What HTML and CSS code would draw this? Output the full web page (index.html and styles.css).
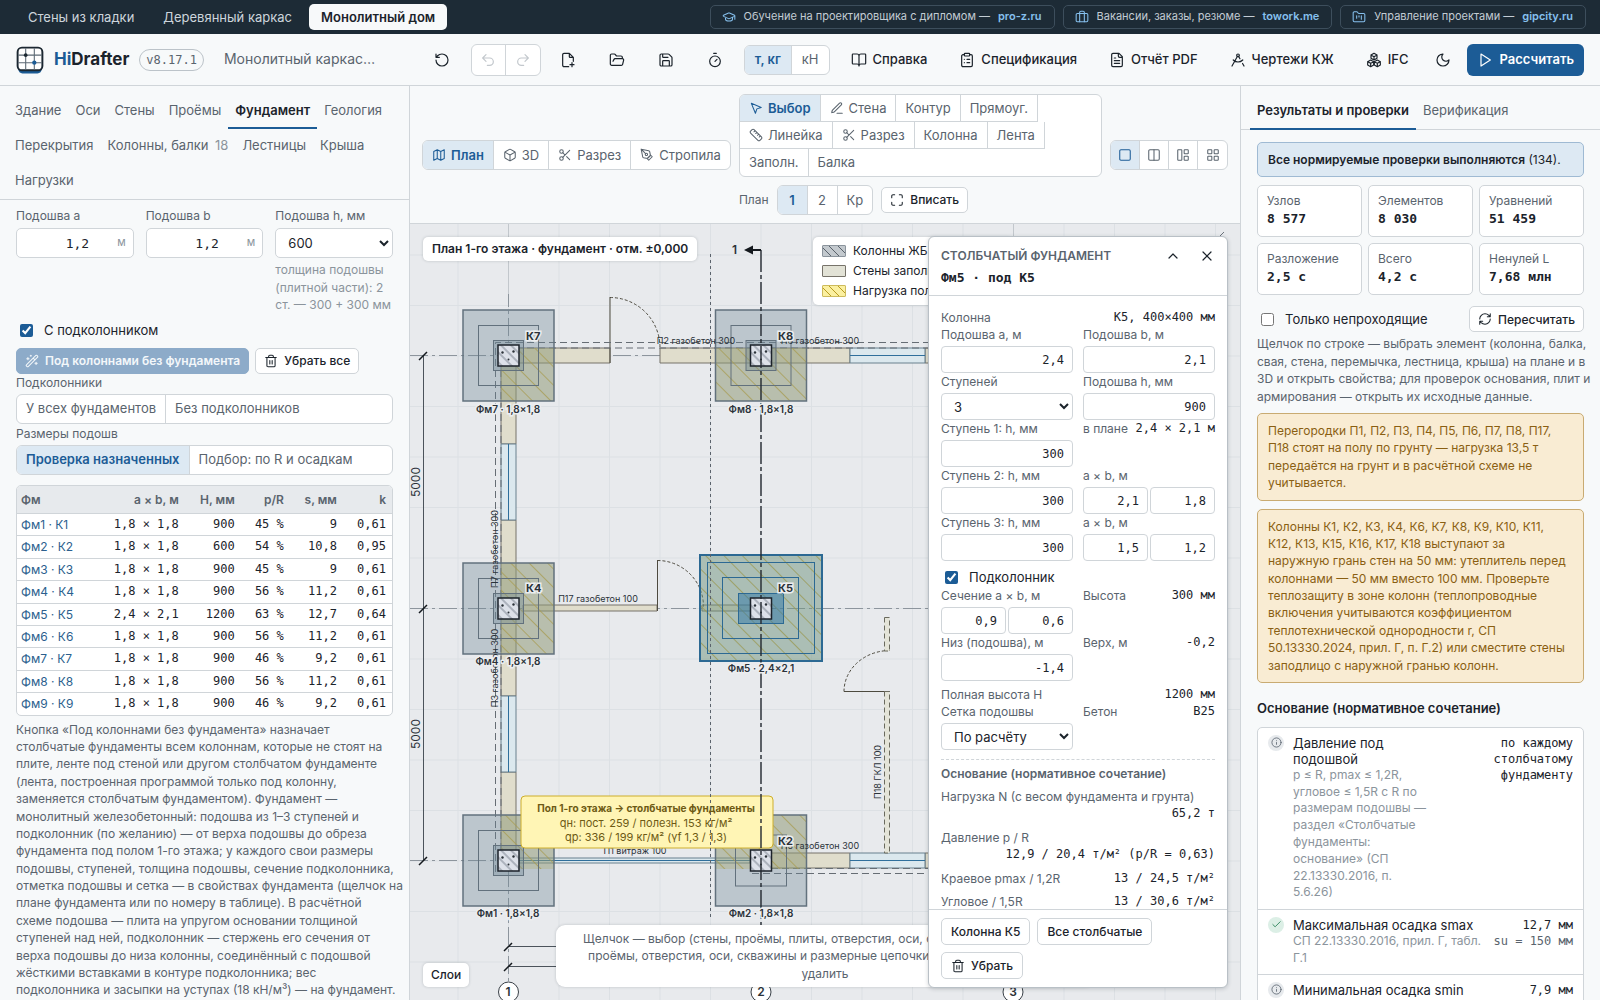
FILE: index.html
```html
<!DOCTYPE html>
<html lang="ru">
<head>
<meta charset="utf-8">
<meta name="viewport" content="width=device-width, initial-scale=1">
<title>HiDrafter — Монолитный дом</title>
<link rel="stylesheet" href="styles.css">
</head>
<body>
<svg class="sprite" aria-hidden="true">
  <symbol id="i-cap" viewBox="0 0 24 24"><path d="M21.4 10.9a1 1 0 0 0 0-1.8L12.8 5.2a2 2 0 0 0-1.6 0L2.6 9.1a1 1 0 0 0 0 1.8l8.6 3.9a2 2 0 0 0 1.6 0zM22 10v6M6 12.5V16a6 3 0 0 0 12 0v-3.5"/></symbol>
  <symbol id="i-case" viewBox="0 0 24 24"><path d="M16 20V4a2 2 0 0 0-2-2h-4a2 2 0 0 0-2 2v16"/><rect x="2" y="6" width="20" height="14" rx="2"/></symbol>
  <symbol id="i-kanban" viewBox="0 0 24 24"><path d="M4 20h16a2 2 0 0 0 2-2V8a2 2 0 0 0-2-2h-7.9a2 2 0 0 1-1.7-.9l-.8-1.2A2 2 0 0 0 7.9 3H4a2 2 0 0 0-2 2v13a2 2 0 0 0 2 2zM8 10v4M12 10v2M16 10v6"/></symbol>
  <symbol id="i-reset" viewBox="0 0 24 24"><path d="M3 12a9 9 0 1 0 9-9 9.8 9.8 0 0 0-6.7 2.7L3 8M3 3v5h5"/></symbol>
  <symbol id="i-undo" viewBox="0 0 24 24"><path d="M9 14 4 9l5-5M4 9h10.500a5.500 5.500 0 0 1 0 11H11"/></symbol>
  <symbol id="i-redo" viewBox="0 0 24 24"><path d="m15 14 5-5-5-5M20 9H9.500a5.500 5.500 0 0 0 0 11H13"/></symbol>
  <symbol id="i-new" viewBox="0 0 24 24"><path d="M13 22H6a2 2 0 0 1-2-2V4a2 2 0 0 1 2-2h8l6 6v6M14 2v5a1 1 0 0 0 1 1h5M18 16v6M15 19h6"/></symbol>
  <symbol id="i-open" viewBox="0 0 24 24"><path d="m6 14 1.5-2.900A2 2 0 0 1 9.200 10H20a2 2 0 0 1 1.900 2.500l-1.500 6a2 2 0 0 1-2 1.500H4a2 2 0 0 1-2-2V5a2 2 0 0 1 2-2h3.900a2 2 0 0 1 1.700.9l.8 1.200a2 2 0 0 0 1.700.9H18a2 2 0 0 1 2 2v2"/></symbol>
  <symbol id="i-save" viewBox="0 0 24 24"><path d="M15.200 3a2 2 0 0 1 1.400.6l3.800 3.800a2 2 0 0 1 .6 1.400V19a2 2 0 0 1-2 2H5a2 2 0 0 1-2-2V5a2 2 0 0 1 2-2zM17 21v-7a1 1 0 0 0-1-1H8a1 1 0 0 0-1 1v7M7 3v4a1 1 0 0 0 1 1h7"/></symbol>
  <symbol id="i-timer" viewBox="0 0 24 24"><path d="M10 2h4M12 14l3-3"/><circle cx="12" cy="14" r="8"/></symbol>
  <symbol id="i-book" viewBox="0 0 24 24"><path d="M12 6v15M3 18a1 1 0 0 1-1-1V4a1 1 0 0 1 1-1h6a3 3 0 0 1 3 3 3 3 0 0 1 3-3h6a1 1 0 0 1 1 1v13a1 1 0 0 1-1 1h-6a3 3 0 0 0-3 3 3 3 0 0 0-3-3z"/></symbol>
  <symbol id="i-clip" viewBox="0 0 24 24"><rect x="8" y="2" width="8" height="4" rx="1"/><path d="M16 4h2a2 2 0 0 1 2 2v14a2 2 0 0 1-2 2H6a2 2 0 0 1-2-2V6a2 2 0 0 1 2-2h2M12 11h4M12 16h4M8 11h.01M8 16h.01"/></symbol>
  <symbol id="i-doc" viewBox="0 0 24 24"><path d="M15 2H6a2 2 0 0 0-2 2v16a2 2 0 0 0 2 2h12a2 2 0 0 0 2-2V7zM14 2v4a2 2 0 0 0 2 2h4M10 9H8M16 13H8M16 17H8"/></symbol>
  <symbol id="i-compass" viewBox="0 0 24 24"><path d="m12.990 6.740 1.930 3.440M19.140 12a10 10 0 0 1-14.280 0M21 21l-2.160-3.840M3 21l8.020-14.260"/><circle cx="12" cy="5" r="2"/></symbol>
  <symbol id="i-boxes" viewBox="0 0 24 24"><path d="m12 2 4.500 2.500v5L12 12 7.500 9.500v-5zM7 12l4.500 2.500v5L7 22l-4.500-2.500v-5zM17 12l4.500 2.500v5L17 22l-4.500-2.500v-5zM7.500 4.500 12 7l4.500-2.500M12 7v5M2.500 14.500 7 17l5-2.500 5 2.500 4.500-2.500M7 17v5M17 17v5"/></symbol>
  <symbol id="i-moon" viewBox="0 0 24 24"><path d="M12 3a6 6 0 0 0 9 9 9 9 0 1 1-9-9z"/></symbol>
  <symbol id="i-play" viewBox="0 0 24 24"><path d="m6 3 14 9-14 9z"/></symbol>
  <symbol id="i-map" viewBox="0 0 24 24"><path d="m3 6 6-3 6 3 6-3v15l-6 3-6-3-6 3zM9 3v15M15 6v15"/></symbol>
  <symbol id="i-cube" viewBox="0 0 24 24"><path d="M21 8a2 2 0 0 0-1-1.700l-7-4a2 2 0 0 0-2 0l-7 4A2 2 0 0 0 3 8v8a2 2 0 0 0 1 1.700l7 4a2 2 0 0 0 2 0l7-4a2 2 0 0 0 1-1.700zM3.300 7l8.700 5 8.700-5M12 22V12"/></symbol>
  <symbol id="i-cut" viewBox="0 0 24 24"><circle cx="6" cy="6" r="3"/><circle cx="6" cy="18" r="3"/><path d="M8.100 8.100 12 12M20 4 8.100 15.900M14.800 14.800 20 20"/></symbol>
  <symbol id="i-pen" viewBox="0 0 24 24"><path d="m15 21 6-6-3-3-6 6zM18 13l-1.400-6.900a2 2 0 0 0-1.600-1.500L2 2l2.600 13a2 2 0 0 0 1.500 1.600L13 18l5-5M2 2l7.600 7.600"/><circle cx="11" cy="11" r="2"/></symbol>
  <symbol id="i-arrow" viewBox="0 0 24 24"><path d="M4 4l7 17 2.500-7.500L21 11z"/></symbol>
  <symbol id="i-pencil" viewBox="0 0 24 24"><path d="M12 21h9M16.400 3.600a2 2 0 0 1 3 3L7.400 18.600a2 2 0 0 1-.9.500l-2.900.8a.5.5 0 0 1-.6-.6l.8-2.900a2 2 0 0 1 .5-.9z"/></symbol>
  <symbol id="i-ruler" viewBox="0 0 24 24"><path d="M21.300 15.300a2.400 2.400 0 0 1 0 3.400l-2.600 2.600a2.400 2.400 0 0 1-3.400 0L2.700 8.700a2.400 2.400 0 0 1 0-3.400l2.600-2.600a2.400 2.400 0 0 1 3.400 0zM14.500 12.500l2-2M11.500 9.500l2-2M8.500 6.500l2-2M17.500 15.500l2-2"/></symbol>
  <symbol id="i-fit" viewBox="0 0 24 24"><path d="M3 8V5a2 2 0 0 1 2-2h3M16 3h3a2 2 0 0 1 2 2v3M21 16v3a2 2 0 0 1-2 2h-3M8 21H5a2 2 0 0 1-2-2v-3"/></symbol>
  <symbol id="i-one" viewBox="0 0 24 24"><rect x="3" y="3" width="18" height="18" rx="2"/></symbol>
  <symbol id="i-two" viewBox="0 0 24 24"><rect x="3" y="3" width="18" height="18" rx="2"/><path d="M12 3v18"/></symbol>
  <symbol id="i-three" viewBox="0 0 24 24"><rect x="3" y="3" width="7" height="18" rx="1"/><rect x="14" y="3" width="7" height="7" rx="1"/><rect x="14" y="14" width="7" height="7" rx="1"/></symbol>
  <symbol id="i-four" viewBox="0 0 24 24"><rect x="3" y="3" width="7" height="7" rx="1"/><rect x="14" y="3" width="7" height="7" rx="1"/><rect x="3" y="14" width="7" height="7" rx="1"/><rect x="14" y="14" width="7" height="7" rx="1"/></symbol>
  <symbol id="i-wand" viewBox="0 0 24 24"><path d="m21.600 3.600-1.200-1.200a1.200 1.200 0 0 0-1.700 0L2.400 18.600a1.200 1.200 0 0 0 0 1.800l1.200 1.200a1.200 1.200 0 0 0 1.800 0L21.600 5.400a1.200 1.200 0 0 0 0-1.800M14 7l3 3M5 6v4M19 14v4M10 2v2M7 8H3M21 16h-4M11 3H9"/></symbol>
  <symbol id="i-trash" viewBox="0 0 24 24"><path d="M3 6h18M19 6v14a2 2 0 0 1-2 2H7a2 2 0 0 1-2-2V6M8 6V4a2 2 0 0 1 2-2h4a2 2 0 0 1 2 2v2M10 11v6M14 11v6"/></symbol>
  <symbol id="i-sync" viewBox="0 0 24 24"><path d="M3 12a9 9 0 0 1 9-9 9.800 9.800 0 0 1 6.700 2.700L21 8M21 3v5h-5M21 12a9 9 0 0 1-9 9 9.800 9.800 0 0 1-6.700-2.700L3 16M8 16H3v5"/></symbol>
  <symbol id="i-info" viewBox="0 0 24 24"><circle cx="12" cy="12" r="10"/><path d="M12 16v-4M12 8h.01"/></symbol>
  <symbol id="i-check" viewBox="0 0 24 24"><path d="M20 6 9 17l-5-5"/></symbol>
  <symbol id="i-up" viewBox="0 0 24 24"><path d="m18 15-6-6-6 6"/></symbol>
  <symbol id="i-x" viewBox="0 0 24 24"><path d="M18 6 6 18M6 6l12 12"/></symbol>
</svg>

<nav class="modes">
  <div class="modes-tabs">
    <button class="mode">Стены из кладки</button>
    <button class="mode">Деревянный каркас</button>
    <button class="mode is-active">Монолитный дом</button>
  </div>
  <div class="promos">
    <a class="promo" href="#"><svg class="ico ico-s"><use href="#i-cap"/></svg>Обучение на проектировщика с дипломом —<b>pro-z.ru</b></a>
    <a class="promo" href="#"><svg class="ico ico-s"><use href="#i-case"/></svg>Вакансии, заказы, резюме —<b>towork.me</b></a>
    <a class="promo" href="#"><svg class="ico ico-s"><use href="#i-kanban"/></svg>Управление проектами —<b>gipcity.ru</b></a>
  </div>
</nav>

<header class="header">
  <svg class="logo" viewBox="0 0 26 26" fill="none">
    <path d="M2 19h22v2c0 3-2 4.500-4 4.500H6c-2 0-4-1.500-4-4.500z" fill="#1c5c96"/>
    <rect x="1.500" y="1.500" width="23" height="21" rx="4" fill="#fff" stroke="#1b2731" stroke-width="1.800"/>
    <path d="M9 2v20M17 2v20M2 8.500h22M2 15.500h22" stroke="#5d6a75"/>
    <circle cx="9" cy="8.500" r="1.700" fill="#1b2731"/><circle cx="17" cy="15.500" r="2" fill="#1c5c96"/>
  </svg>
  <div class="brand"><span>Hi</span>Drafter</div>
  <span class="version">v8.17.1</span>
  <span class="project">Монолитный каркас…</span>
  <div class="actions">
    <button class="icon-btn" aria-label="Сбросить"><svg class="ico"><use href="#i-reset"/></svg></button>
    <div class="seg history">
      <button disabled aria-label="Отменить"><svg class="ico"><use href="#i-undo"/></svg></button>
      <button disabled aria-label="Повторить"><svg class="ico"><use href="#i-redo"/></svg></button>
    </div>
    <button class="icon-btn" aria-label="Новый"><svg class="ico"><use href="#i-new"/></svg></button>
    <button class="icon-btn" aria-label="Открыть"><svg class="ico"><use href="#i-open"/></svg></button>
    <button class="icon-btn" aria-label="Сохранить"><svg class="ico"><use href="#i-save"/></svg></button>
    <button class="icon-btn" aria-label="Автосохранение"><svg class="ico"><use href="#i-timer"/></svg></button>
    <div class="seg units"><button class="on">т, кг</button><button>кН</button></div>
    <button class="text-btn"><svg class="ico"><use href="#i-book"/></svg>Справка</button>
    <button class="text-btn"><svg class="ico"><use href="#i-clip"/></svg>Спецификация</button>
    <button class="text-btn"><svg class="ico"><use href="#i-doc"/></svg>Отчёт PDF</button>
    <button class="text-btn"><svg class="ico"><use href="#i-compass"/></svg>Чертежи КЖ</button>
    <button class="text-btn"><svg class="ico"><use href="#i-boxes"/></svg>IFC</button>
    <button class="moon-btn" aria-label="Тёмная тема"><svg class="ico"><use href="#i-moon"/></svg></button>
    <button class="primary"><svg class="ico"><use href="#i-play"/></svg>Рассчитать</button>
  </div>
</header>

<main class="workspace">
  <aside class="left">
    <nav class="side-tabs">
      <button>Здание</button><button>Оси</button><button>Стены</button><button>Проёмы</button><button class="on">Фундамент</button><button>Геология</button><button>Перекрытия</button><button>Колонны, балки <span class="count">18</span></button><button>Лестницы</button><button>Крыша</button><button>Нагрузки</button>
    </nav>
    <div class="left-body">
      <div class="fields">
        <div class="field"><label for="fa">Подошва a</label><div class="unit-box"><input id="fa" value="1,2"><span>м</span></div></div>
        <div class="field"><label for="fb">Подошва b</label><div class="unit-box"><input id="fb" value="1,2"><span>м</span></div></div>
        <div class="field"><label for="fh">Подошва h, мм</label><select id="fh" class="select"><option>600</option></select><p class="hint">толщина подошвы<br>(плитной части): 2<br>ст. — 300 + 300 мм</p></div>
      </div>
      <label class="check"><input type="checkbox" checked>С подколонником</label>
      <div class="btn-row">
        <button class="btn btn-soft"><svg class="ico ico-s"><use href="#i-wand"/></svg>Под колоннами без фундамента</button>
        <button class="btn"><svg class="ico ico-s"><use href="#i-trash"/></svg>Убрать все</button>
      </div>
      <div class="cap">Подколонники</div>
      <div class="seg wide"><button>У всех фундаментов</button><button>Без подколонников</button></div>
      <div class="cap">Размеры подошв</div>
      <div class="seg wide"><button class="on">Проверка назначенных</button><button>Подбор: по R и осадкам</button></div>
      <div class="table-box">
        <table>
          <thead><tr><th>Фм</th><th>a × b, м</th><th>H, мм</th><th>p/R</th><th>s, мм</th><th>k</th></tr></thead>
          <tbody>
            <tr><td><a href="#">Фм1 · К1</a></td><td>1,8 × 1,8</td><td>900</td><td>45 %</td><td>9</td><td>0,61</td></tr>
            <tr><td><a href="#">Фм2 · К2</a></td><td>1,8 × 1,8</td><td>600</td><td>54 %</td><td>10,8</td><td>0,95</td></tr>
            <tr><td><a href="#">Фм3 · К3</a></td><td>1,8 × 1,8</td><td>900</td><td>45 %</td><td>9</td><td>0,61</td></tr>
            <tr><td><a href="#">Фм4 · К4</a></td><td>1,8 × 1,8</td><td>900</td><td>56 %</td><td>11,2</td><td>0,61</td></tr>
            <tr><td><a href="#">Фм5 · К5</a></td><td>2,4 × 2,1</td><td>1200</td><td>63 %</td><td>12,7</td><td>0,64</td></tr>
            <tr><td><a href="#">Фм6 · К6</a></td><td>1,8 × 1,8</td><td>900</td><td>56 %</td><td>11,2</td><td>0,61</td></tr>
            <tr><td><a href="#">Фм7 · К7</a></td><td>1,8 × 1,8</td><td>900</td><td>46 %</td><td>9,2</td><td>0,61</td></tr>
            <tr><td><a href="#">Фм8 · К8</a></td><td>1,8 × 1,8</td><td>900</td><td>56 %</td><td>11,2</td><td>0,61</td></tr>
            <tr><td><a href="#">Фм9 · К9</a></td><td>1,8 × 1,8</td><td>900</td><td>46 %</td><td>9,2</td><td>0,61</td></tr>
          </tbody>
        </table>
      </div>
      <p class="note">Кнопка «Под колоннами без фундамента» назначает<br>столбчатые фундаменты всем колоннам, которые не стоят на<br>плите, ленте под стеной или другом столбчатом фундаменте<br>(лента, построенная программой только под колонну,<br>заменяется столбчатым фундаментом). Фундамент —<br>монолитный железобетонный: подошва из 1–3 ступеней и<br>подколонник (по желанию) — от верха подошвы до обреза<br>фундамента под полом 1-го этажа; у каждого свои размеры<br>подошвы, ступеней, толщина подошвы, сечение подколонника,<br>отметка подошвы и сетка — в свойствах фундамента (щелчок на<br>плане фундамента или по номеру в таблице). В расчётной<br>схеме подошва — плита на упругом основании толщиной<br>ступеней над ней, подколонник — стержень его сечения от<br>верха подошвы до низа колонны, соединённый с подошвой<br>жёсткими вставками в контуре подколонника; вес<br>подколонника и засыпки на уступах (18 кН/м³) — на фундамент.</p>
    </div>
  </aside>

  <section class="center">
    <div class="toolbar">
      <div class="seg views">
        <button class="on"><svg class="ico ico-s"><use href="#i-map"/></svg>План</button>
        <button><svg class="ico ico-s"><use href="#i-cube"/></svg>3D</button>
        <button><svg class="ico ico-s"><use href="#i-cut"/></svg>Разрез</button>
        <button><svg class="ico ico-s"><use href="#i-pen"/></svg>Стропила</button>
      </div>
      <div class="tools">
        <button class="on"><svg class="ico ico-s"><use href="#i-arrow"/></svg>Выбор</button>
        <button><svg class="ico ico-s"><use href="#i-pencil"/></svg>Стена</button>
        <button>Контур</button>
        <button>Прямоуг.</button>
        <i class="break"></i>
        <button><svg class="ico ico-s"><use href="#i-ruler"/></svg>Линейка</button>
        <button><svg class="ico ico-s"><use href="#i-cut"/></svg>Разрез</button>
        <button>Колонна</button>
        <button>Лента</button>
        <i class="break"></i>
        <button>Заполн.</button>
        <button>Балка</button>
      </div>
      <div class="seg layouts">
        <button class="on" aria-label="Один вид"><svg class="ico ico-s"><use href="#i-one"/></svg></button>
        <button aria-label="Два вида"><svg class="ico ico-s"><use href="#i-two"/></svg></button>
        <button aria-label="Три вида"><svg class="ico ico-s"><use href="#i-three"/></svg></button>
        <button aria-label="Четыре вида"><svg class="ico ico-s"><use href="#i-four"/></svg></button>
      </div>
      <div class="floors">
        <span class="floors-cap">План</span>
        <div class="seg"><button class="on">1</button><button>2</button><button>Кр</button></div>
        <button class="btn"><svg class="ico ico-s"><use href="#i-fit"/></svg>Вписать</button>
      </div>
    </div>

    <div class="canvas">
      <svg class="plan" width="830" height="776" viewBox="0 0 830 776">
        <defs>
          <pattern id="grid" x="47.500" y="30.500" width="50.500" height="50.500" patternUnits="userSpaceOnUse"><path d="M.5 0v50.500M0 .5h50.500" stroke="#dce0e4" fill="none"/></pattern>
          <pattern id="hatch" width="13" height="13" patternUnits="userSpaceOnUse" patternTransform="rotate(-45)"><path d="M.5 0v13" stroke="#c8a72c" stroke-opacity=".75" stroke-width="1"/></pattern>
          <pattern id="conc" width="7" height="7" patternUnits="userSpaceOnUse" patternTransform="rotate(-45)"><path d="M2 0v7" stroke="#7b8490" stroke-width="1"/></pattern>
          <g id="column"><rect x="-10.500" y="-10.500" width="21" height="21" fill="#dde1e9"/><rect x="-10.500" y="-10.500" width="21" height="21" fill="url(#conc)" stroke="#1c232b" stroke-width="1.500"/><circle cx="-6" cy="-3" r="1.200"/><circle cx="5" cy="-4" r="1.200"/><circle cx="0" cy="4" r="1"/></g>
          <g id="foot" fill="#6f8796" fill-opacity=".36" stroke="#62717d"><rect x="-45.500" y="-45.500" width="91" height="91" stroke-width="1.500"/><rect x="-30" y="-30" width="60" height="60" fill="none"/><rect x="-15" y="-15" width="30" height="30"/></g>
        </defs>
        <rect width="830" height="776" fill="url(#grid)"/>
        <g stroke="#8d959d" stroke-dasharray="18 4 3 4"><path d="M98.500 65V758M0 131.500H520M0 384.500H520M0 636.500H100"/></g>
        <path d="M98.500 0v70M603.500 0v12" stroke="#c2c7cc"/>
        <g class="walls" fill="#e0ddcc" stroke="#77736a">
          <path d="M91 124h109v15H91zM250 124h190v15H250zM515 124h10v15h-10z"/>
          <path d="M91 139h15v81H91zM91 296h15v176H91zM91 548h15v88H91z"/>
          <path d="M361 629h79v15h-79zM515 629h10v15h-10z"/>
          <path d="M113 381h134v6H113zM292 381h49v6h-49z"/>
        </g>
        <g fill="#dbe8ee" stroke="#68808e"><path d="M440 124h75v15h-75zM91 220h15v76H91zM91 472h15v76H91zM440 629h75v15h-75zM109 634h231v5H109z"/></g>
        <path d="M440 131.500h75M98.500 220v76M98.500 472v76M440 636.500h75M109 636.500h231" stroke="#2f6f9c"/>
        <g fill="none" stroke="#4d4a3f"><path d="M200 73v66M247.500 336v51M434 467.500h46"/><path d="M200 73.500a50 50 0 0 1 50 50M247.500 336.500a46 46 0 0 1 46 46M434 467.500a46 41 0 0 1 46-41" stroke-dasharray="3 2"/></g>
        <path d="M474.500 393.500h5V427h-5zM474.500 467.500h5V629h-5z" fill="#e4e4d8" stroke="#6a6a5e" stroke-dasharray="5 3"/>
        <g fill="none" stroke="#666d74" stroke-dasharray="7 4"><path d="M520 118.500H85.500V648M520 124H91V644M342 649.500h180M361 644.500h160"/></g>

        <path d="M91 124h53v53H91zM305.500 124h91v53h-91zM91 339h53v91H91zM290 331h122v106H290zM91 591h53v54H91zM305.500 591h91v54h-91z" fill="#d2bf45" fill-opacity=".3"/>
        <path d="M91 124h53v53H91zM305.500 124h91v53h-91zM91 339h53v91H91zM290 331h122v106H290zM91 591h53v54H91zM305.500 591h91v54h-91z" fill="url(#hatch)"/>
        <use href="#foot" x="98.500" y="131.500"/><use href="#foot" x="351" y="131.500"/>
        <use href="#foot" x="98.500" y="384.500"/><use href="#foot" x="98.500" y="636.500"/>
        <g fill="#6f8796" fill-opacity=".36" stroke="#62717d"><rect x="305.500" y="591" width="91" height="91" stroke-width="1.500"/><rect x="325.500" y="611" width="51" height="51" fill="none"/></g>
        <g fill="#2d76a8" fill-opacity=".3" stroke="#2c6993"><rect x="290" y="331" width="122" height="106" stroke-width="2"/><rect x="297.500" y="338.500" width="107" height="91" fill="none"/><rect x="312.500" y="353.500" width="76" height="61" fill="none"/><rect x="328.500" y="369.500" width="45" height="30" fill-opacity=".5"/></g>

        <g class="lbl" text-anchor="middle"><text x="286" y="120">П2 газобетон 300</text><text x="410" y="120">П6 газобетон 300</text><text x="188" y="378">П17 газобетон 100</text><text x="225" y="630">П1 витраж 100</text><text x="410" y="625">П5 газобетон 300</text><text transform="translate(88 325) rotate(-90)">П7 газобетон 300</text><text transform="translate(88 444) rotate(-90)">П3 газобетон 300</text><text transform="translate(471 548) rotate(-90)">П18 ГКЛ 100</text></g>

        <g><rect x="111" y="572" width="252" height="52" rx="4" fill="#fff5b5" stroke="#cdae2c"/>
          <g class="tip" text-anchor="middle"><text class="tip-b" x="236" y="588">Пол 1-го этажа → столбчатые фундаменты</text><text x="236" y="603">qн: пост. 259 / полезн. 153 кг/м²</text><text x="236" y="617">qр: 336 / 199 кг/м² (γf 1,3 / 1,3)</text></g></g>

        <path d="M300.500 30V696" stroke="#5b636c" stroke-dasharray="3 3"/>
        <use href="#column" x="98.500" y="131.500"/><use href="#column" x="351" y="131.500"/><use href="#column" x="98.500" y="384.500"/><use href="#column" x="351" y="384.500"/><use href="#column" x="98.500" y="636.500"/><use href="#column" x="351" y="636.500"/>
        <path d="M351 26V760" stroke="#23292f" stroke-width="1.400" stroke-dasharray="22 3 4 3"/>
        <path d="M351 26h-10" stroke="#14191e" stroke-width="2"/><path d="m334 26 9-4.500v9z" fill="#14191e"/>
        <text class="sec" x="322" y="30">1</text>
        <g class="klbl"><text x="116" y="116">К7</text><text x="368" y="116">К8</text><text x="116" y="368">К4</text><text x="368" y="368">К5</text><text x="368" y="621">К2</text></g>
        <g class="flbl" text-anchor="middle"><text x="98" y="189">Фм7 · 1,8×1,8</text><text x="351" y="189">Фм8 · 1,8×1,8</text><text x="98" y="441">Фм4 · 1,8×1,8</text><text x="351" y="448">Фм5 · 2,4×2,1</text><text x="98" y="693">Фм1 · 1,8×1,8</text><text x="351" y="693">Фм2 · 1,8×1,8</text></g>

        <path d="M13.500 131V636M98 722.500h60M98 742.500h60" stroke="#4b535b"/>
        <path d="m9 136 8-8M9 389l8-8M9 641l8-8M94 727l8-8M94 747l8-8" stroke="#14191e" stroke-width="1.500"/>
        <path d="m808 14 6-6" stroke="#6b737b"/>
        <g class="dim" text-anchor="middle"><text transform="translate(10 258) rotate(-90)">5000</text><text transform="translate(10 510) rotate(-90)">5000</text></g>
        <g fill="#fff" stroke="#3a4148"><circle cx="98.500" cy="768" r="10"/><circle cx="351" cy="768" r="10"/><circle cx="603" cy="768" r="10"/></g>
        <g class="axis" text-anchor="middle"><text x="98" y="772">1</text><text x="351" y="772">2</text><text x="603" y="772">3</text></g>
      </svg>

      <div class="plan-title">План 1-го этажа · фундамент · отм. ±0,000</div>
      <ul class="legend">
        <li><i class="sw sw-col"></i>Колонны ЖБ</li>
        <li><i class="sw sw-wall"></i>Стены заполнения</li>
        <li><i class="sw sw-load"></i>Нагрузка пола</li>
      </ul>
      <button class="layers">Слои</button>
      <div class="tip-bar">Щелчок — выбор (стены, проёмы, плиты, отверстия, оси, скважины); концы стен,<br>проёмы, отверстия, оси, скважины и размерные цепочки перетащить; Delete —<br>удалить</div>

      <section class="props">
        <header class="props-head">
          <div><h2>СТОЛБЧАТЫЙ ФУНДАМЕНТ</h2><div class="props-sub">Фм5 · под К5</div></div>
          <div class="props-ctl"><button aria-label="Свернуть"><svg class="ico"><use href="#i-up"/></svg></button><button aria-label="Закрыть"><svg class="ico"><use href="#i-x"/></svg></button></div>
        </header>
        <div class="props-body">
          <div class="kv"><span>Колонна</span><b>К5, 400×400 мм</b></div>
          <div class="grid2">
            <div class="pf"><label for="p1">Подошва a, м</label><input id="p1" value="2,4"></div>
            <div class="pf"><label for="p2">Подошва b, м</label><input id="p2" value="2,1"></div>
            <div class="pf"><label for="p3">Ступеней</label><select id="p3" class="select"><option>3</option></select></div>
            <div class="pf"><label for="p4">Подошва h, мм</label><input id="p4" value="900"></div>
            <div class="pf"><label for="p5">Ступень 1: h, мм</label><input id="p5" value="300"></div>
            <div class="kv"><span>в плане</span><b>2,4 × 2,1 м</b></div>
            <div class="pf"><label for="p6">Ступень 2: h, мм</label><input id="p6" value="300"></div>
            <div class="pf"><label for="p7">a × b, м</label><div class="pair"><input id="p7" value="2,1"><input aria-label="b, м" value="1,8"></div></div>
            <div class="pf"><label for="p8">Ступень 3: h, мм</label><input id="p8" value="300"></div>
            <div class="pf"><label for="p9">a × b, м</label><div class="pair"><input id="p9" value="1,5"><input aria-label="b, м" value="1,2"></div></div>
          </div>
          <label class="check check-p"><input type="checkbox" checked>Подколонник</label>
          <div class="grid2">
            <div class="pf"><label for="p10">Сечение a × b, м</label><div class="pair"><input id="p10" value="0,9"><input aria-label="b, м" value="0,6"></div></div>
            <div class="kv"><span>Высота</span><b>300 мм</b></div>
            <div class="pf"><label for="p11">Низ (подошва), м</label><input id="p11" value="-1,4"></div>
            <div class="kv"><span>Верх, м</span><b>-0,2</b></div>
          </div>
          <div class="kv kv-top"><span>Полная высота H</span><b>1200 мм</b></div>
          <div class="grid2">
            <div class="pf"><label for="p12">Сетка подошвы</label><select id="p12" class="select"><option>По расчёту</option></select></div>
            <div class="kv"><span>Бетон</span><b>B25</b></div>
          </div>
          <h3>Основание (нормативное сочетание)</h3>
          <div class="kv kv-wrap"><span>Нагрузка N (с весом фундамента и грунта)</span><b>65,2 т</b></div>
          <div class="kv kv-wrap"><span>Давление p / R</span><b>12,9 / 20,4 т/м² (p/R = 0,63)</b></div>
          <div class="kv kv-row"><span>Краевое pmax / 1,2R</span><b>13 / 24,5 т/м²</b></div>
          <div class="kv kv-row"><span>Угловое / 1,5R</span><b>13 / 30,6 т/м²</b></div>
        </div>
        <footer class="props-foot">
          <button class="btn">Колонна К5</button><button class="btn">Все столбчатые</button><button class="btn"><svg class="ico ico-s"><use href="#i-trash"/></svg>Убрать</button>
        </footer>
      </section>
    </div>
  </section>

  <aside class="right">
    <nav class="res-tabs"><button class="on">Результаты и проверки</button><button>Верификация</button></nav>
    <div class="right-body">
      <div class="ok-box"><b>Все нормируемые проверки выполняются</b> (134).</div>
      <div class="stats">
        <div><span>Узлов</span><b>8 577</b></div><div><span>Элементов</span><b>8 030</b></div><div><span>Уравнений</span><b>51 459</b></div>
        <div><span>Разложение</span><b>2,5 с</b></div><div><span>Всего</span><b>4,2 с</b></div><div><span>Ненулей L</span><b>7,68 млн</b></div>
      </div>
      <div class="filter"><label class="check"><input type="checkbox">Только непроходящие</label><button class="btn"><svg class="ico ico-s"><use href="#i-sync"/></svg>Пересчитать</button></div>
      <p class="note">Щелчок по строке — выбрать элемент (колонна, балка,<br>свая, стена, перемычка, лестница, крыша) на плане и в<br>3D и открыть свойства; для проверок основания, плит и<br>армирования — открыть их исходные данные.</p>
      <div class="warn">Перегородки П1, П2, П3, П4, П5, П6, П7, П8, П17,<br>П18 стоят на полу по грунту — нагрузка 13,5 т<br>передаётся на грунт и в расчётной схеме не<br>учитывается.</div>
      <div class="warn">Колонны К1, К2, К3, К4, К6, К7, К8, К9, К10, К11,<br>К12, К13, К15, К16, К17, К18 выступают за<br>наружную грань стен на 50 мм: утеплитель перед<br>колоннами — 50 мм вместо 100 мм. Проверьте<br>теплозащиту в зоне колонн (теплопроводные<br>включения учитываются коэффициентом<br>теплотехнической однородности r, СП<br>50.13330.2024, прил. Г, п. Г.2) или сместите стены<br>заподлицо с наружной гранью колонн.</div>
      <h2 class="res-title">Основание (нормативное сочетание)</h2>
      <div class="checks">
        <div class="check-row"><span class="st"><svg class="ico"><use href="#i-info"/></svg></span><div><div class="ct">Давление под<br>подошвой</div><small>p ≤ R, pmax ≤ 1,2R,<br>угловое ≤ 1,5R с R по<br>размерам подошвы —<br>раздел «Столбчатые<br>фундаменты:<br>основание» (СП<br>22.13330.2016, п.<br>5.6.26)</small></div><div class="cv">по каждому<br>столбчатому<br>фундаменту</div></div>
        <div class="check-row"><span class="st st-ok"><svg class="ico"><use href="#i-check"/></svg></span><div><div class="ct">Максимальная осадка smax</div><small>СП 22.13330.2016, прил. Г, табл.<br>Г.1</small></div><div class="cv">12,7 мм<br><span>su = 150 мм</span></div></div>
        <div class="check-row"><span class="st"><svg class="ico"><use href="#i-info"/></svg></span><div><div class="ct">Минимальная осадка smin</div></div><div class="cv">7,9 мм</div></div>
      </div>
    </div>
  </aside>
</main>
</body>
</html>
```
FILE: styles.css
```css
:root {
  --ink: #1b232b;
  --muted: #5a646e;
  --faint: #8b949c;
  --line: #d0d5d9;
  --blue: #1c5c96;
  --soft: #dde9f3;
  --bg: #f7f9fa;
  --sans: Inter, "Noto Sans", sans-serif;
  --mono: "DejaVu Sans Mono", "Liberation Mono", monospace;
}
* { box-sizing: border-box; }
body {
  margin: 0;
  height: 100vh;
  display: flex;
  flex-direction: column;
  overflow: hidden;
  background: var(--bg);
  color: var(--ink);
  font: 13px/1.45 var(--sans);
}
button, input, select { font: inherit; color: inherit; margin: 0; }
button { background: none; border: 0; padding: 0; white-space: nowrap; cursor: pointer; }
h2, h3, p, ul { margin: 0; padding: 0; }
.sprite { display: none; }
.ico { width: 16px; height: 16px; flex: none; fill: none; stroke: currentColor; stroke-width: 1.8; stroke-linecap: round; stroke-linejoin: round; }
.ico-s { width: 14px; height: 14px; }

/* mode switch */
.modes { flex: none; height: 34px; padding: 0 14px 0 16px; background: #1d2b36; display: flex; justify-content: space-between; align-items: center; }
.modes-tabs { display: flex; gap: 5px; }
.mode { height: 26px; padding: 0 12px; border-radius: 5px; color: #cdd5dc; }
.mode.is-active { background: #f7f9fa; color: var(--ink); font-weight: 600; }
.promos { display: flex; gap: 8px; }
.promo { height: 24px; padding: 0 12px 0 11px; display: flex; align-items: center; gap: 8px; border: 1px solid #3d4e5c; border-radius: 5px; color: #c3ccd4; font-size: 11px; text-decoration: none; white-space: nowrap; }
.promo b { color: #86c0ee; font-weight: 600; }
.promo .ico { color: #86c0ee; }

/* header */
.header { flex: none; height: 52px; padding: 0 16px; display: flex; align-items: center; border-bottom: 1px solid var(--line); }
.logo { width: 28px; height: 28px; flex: none; }
.brand { margin-left: 10px; font-size: 17px; font-weight: 700; }
.brand span { color: var(--blue); }
.version { margin-left: 10px; padding: 0 6px; border: 1px solid #bcc3c9; border-radius: 11px; font: 12px/20px var(--mono); color: var(--muted); }
.project { margin-left: 20px; font-size: 14px; color: var(--muted); }
.actions { margin-left: auto; display: flex; align-items: center; font-weight: 500; }
.icon-btn { width: 49px; height: 32px; display: grid; place-items: center; }
.icon-btn:first-child { width: 58px; }
.seg { display: flex; background: #fff; border: 1px solid var(--line); border-radius: 6px; overflow: hidden; color: var(--muted); }
.seg button { display: flex; align-items: center; justify-content: center; gap: 6px; border-right: 1px solid var(--line); }
.seg button:last-child { border-right: 0; }
.seg .on { background: var(--soft); color: var(--blue); font-weight: 600; }
.history { height: 32px; margin-right: 3px; }
.history button { width: 34px; color: #c3c8cd; }
.units { height: 30px; margin-left: 4px; margin-right: 8px; }
.units button { padding: 0 10px; font-weight: 400; }
.text-btn { height: 32px; padding: 0 13px; margin-right: 6px; display: flex; align-items: center; gap: 6px; }
.moon-btn { width: 32px; height: 32px; display: grid; place-items: center; margin-right: 8px; }
.primary { height: 32px; padding: 0 10px; display: flex; align-items: center; gap: 6px; background: var(--blue); color: #fff; border-radius: 6px; font-weight: 600; }

.workspace { flex: 1; min-height: 0; display: grid; grid-template-columns: 410px minmax(0, 1fr) 360px; }

/* left panel */
.left { border-right: 1px solid var(--line); display: flex; flex-direction: column; min-height: 0; }
.side-tabs { padding: 8px 8px 0; display: flex; flex-wrap: wrap; border-bottom: 1px solid var(--line); }
.side-tabs button { height: 35px; padding: 0 7px; color: var(--muted); border-bottom: 2px solid transparent; }
.side-tabs .on, .res-tabs .on { color: var(--ink); font-weight: 600; border-bottom-color: var(--blue); }
.count { margin-left: 3px; color: var(--faint); }
.left-body { padding: 7px 16px 0; flex: 1; min-height: 0; overflow: hidden; }
.fields { display: grid; grid-template-columns: repeat(3, 1fr); gap: 12px; }
.field label, .cap, .pf label, .kv span { display: block; font-size: 12px; color: var(--muted); white-space: nowrap; }
.field label { margin-bottom: 4px; }
.unit-box, .field .select { height: 30px; border: 1px solid var(--line); border-radius: 5px; background: #fff; width: 100%; }
.unit-box { display: flex; align-items: center; padding: 0 7px; }
.unit-box input { width: 100%; min-width: 0; border: 0; background: none; text-align: right; padding: 0 28px 0 0; font: 13px var(--mono); }
.unit-box span { font-size: 11px; color: var(--faint); }
.field .select, .pf .select { padding: 0 8px; }
.hint { margin-top: 3px; font-size: 12px; color: var(--faint); white-space: nowrap; }
.check { display: flex; align-items: center; gap: 11px; padding-left: 4px; height: 28px; }
.check input { width: 13px; height: 13px; accent-color: var(--blue); }
.left .check { margin-top: 3px; }
.btn-row { display: flex; gap: 6px; margin-top: 3px; }
.btn { height: 26px; padding: 0 8px; display: inline-flex; align-items: center; gap: 6px; background: #fff; border: 1px solid var(--line); border-radius: 5px; font-size: 12px; font-weight: 500; }
.btn-soft { background: #8dabc9; border-color: #8dabc9; color: #f3f7fa; font-weight: 600; }
.cap { height: 20px; line-height: 17px; }
.wide { height: 30px; margin-bottom: 1px; }
.wide button { padding: 0 9px; }
.table-box { margin-top: 10px; border: 1px solid var(--line); border-radius: 5px; background: #fff; overflow: hidden; }
table { width: 100%; border-collapse: collapse; font-size: 12px; }
th { height: 28px; padding: 0 6px; background: #e7eaed; color: var(--muted); font-weight: 600; text-align: right; }
td { padding: 2px 6px; border-top: 1px solid var(--line); text-align: right; font-family: var(--mono); white-space: nowrap; }
th:first-child, td:first-child { padding-left: 4px; text-align: left; font-family: var(--sans); }
td a { color: #2c5f8e; text-decoration: none; }
.note { margin-top: 5px; font-size: 12px; color: var(--muted); white-space: nowrap; }

/* centre toolbar */
.center { display: flex; flex-direction: column; min-width: 0; min-height: 0; }
.toolbar { padding: 8px 12px; display: grid; grid-template-columns: auto minmax(0, 1fr) auto; gap: 8px; border-bottom: 1px solid var(--line); }
.views, .layouts { height: 30px; align-self: end; margin-bottom: 7px; }
.views button { padding: 0 9px; gap: 5px; }
.layouts button { width: 29px; }
.tools { display: flex; flex-wrap: wrap; background: #fff; border: 1px solid var(--line); border-radius: 6px; overflow: hidden; color: var(--muted); }
.tools button { height: 27px; padding: 0 9px; display: flex; align-items: center; gap: 5px; border-right: 1px solid var(--line); border-bottom: 1px solid var(--line); }
.tools .on { background: var(--soft); color: var(--blue); font-weight: 600; }
.tools .break { width: 100%; height: 0; }
.tools button:nth-last-child(-n+2) { border-bottom: 0; }
.tools button:last-child { border-right: 0; }
.floors { grid-column: 2 / 4; display: flex; align-items: center; gap: 8px; }
.floors-cap { font-size: 12px; color: var(--muted); }
.floors .seg { height: 30px; }
.floors .seg button { min-width: 30px; padding: 0 9px; }

/* plan */
.canvas { position: relative; flex: 1; min-height: 0; overflow: hidden; background: #e8eaed; }
.plan { position: absolute; left: 0; top: 0; font-family: var(--sans); fill: none; }
.plan text { fill: #2b3239; stroke: none; }
.plan circle { fill: #2b3239; }
.plan g[fill="#fff"] circle { fill: #fff; }
.lbl { font-size: 9px; }
.tip { font-size: 11px; }
.plan .tip text { fill: #6d5a14; }
.tip .tip-b { font-size: 10px; font-weight: 700; }
.klbl { font-size: 11px; font-weight: 700; }
.flbl { font-size: 10px; font-weight: 600; }
.plan .klbl text, .plan .flbl text { paint-order: stroke; stroke: #eceef0; stroke-width: 3px; }
.dim, .axis, .sec { font-size: 12px; }
.axis, .sec { font-weight: 600; }
.plan-title, .legend, .layers, .tip-bar { position: absolute; background: #fff; border-radius: 5px; box-shadow: 0 0 3px rgba(30, 40, 50, .22); }
.plan-title { left: 13px; top: 13px; height: 24px; padding: 0 9px; font-size: 12px; line-height: 24px; font-weight: 600; white-space: nowrap; }
.legend { left: 403px; top: 13px; width: 200px; padding: 4px 9px; list-style: none; font-size: 12px; }
.legend li { display: flex; align-items: center; gap: 7px; height: 20px; white-space: nowrap; }
.sw { width: 24px; height: 12px; border: 1px solid #8b949c; border-radius: 1px; }
.sw-col { background: repeating-linear-gradient(45deg, #c3c9ce 0 5px, #59616a 5px 6px); }
.sw-wall { background: #e2e2d6; border-color: #77736a; }
.sw-load { background: repeating-linear-gradient(45deg, #fbf0a0 0 5px, #b89a20 5px 6px); border-color: #cdbb5c; }
.layers { left: 13px; bottom: 13px; height: 24px; padding: 0 8px; font-weight: 500; font-size: 12px; }
.tip-bar { left: 146px; bottom: 13px; width: 538px; padding: 5px 0; border-radius: 9px; font-size: 12px; color: var(--muted); text-align: center; white-space: nowrap; }

/* properties window */
.props { position: absolute; right: 12px; top: 12px; bottom: 12px; width: 300px; display: flex; flex-direction: column; background: #fff; border: 1px solid #b9c0c6; border-radius: 6px; box-shadow: 0 1px 4px rgba(30, 40, 50, .2); }
.props-head { flex: none; height: 59px; padding: 10px 12px 0; display: flex; justify-content: space-between; border-bottom: 1px solid var(--line); }
.props-head h2 { font-size: 12px; font-weight: 600; color: var(--muted); }
.props-sub { margin-top: 4px; font: bold 13px/20px var(--mono); }
.props-ctl { display: flex; gap: 18px; height: 22px; }
.props-body { flex: 1; min-height: 0; overflow: hidden; padding: 13px 12px 0; }
.kv { display: flex; justify-content: space-between; gap: 6px; height: 17px; }
.kv b { font: 12px/17px var(--mono); white-space: nowrap; margin-left: auto; }
.grid2 { display: grid; grid-template-columns: 1fr 1fr; column-gap: 10px; }
.pf { height: 47px; }
.pf label { height: 17px; margin-bottom: 3px; }
.pf input, .pf .select { width: 100%; min-width: 0; height: 27px; border: 1px solid var(--line); border-radius: 4px; background: #fff; }
.pf input { text-align: right; padding: 0 8px; font: 12px var(--mono); }
.pair { display: flex; gap: 2px; }
.check-p { height: 26px; padding-top: 6px; }
.kv-top { margin-top: 5px; }
.props h3 { margin-top: 9px; padding-top: 5px; margin-bottom: 6px; border-top: 1px dashed var(--line); font-size: 12px; line-height: 17px; font-weight: 600; color: var(--muted); }
.kv-wrap { flex-wrap: wrap; align-content: flex-start; row-gap: 0; height: 35px; margin-bottom: 6px; }
.kv-wrap span { width: 100%; }
.kv-row { margin-bottom: 6px; }
.props-foot { flex: none; padding: 8px 12px; display: flex; flex-wrap: wrap; gap: 7px; border-top: 1px solid var(--line); }
.props-foot .btn { height: 27px; padding: 0 9px; }

/* results */
.right { border-left: 1px solid var(--line); display: flex; flex-direction: column; min-width: 0; min-height: 0; }
.res-tabs { flex: none; padding: 8px 9px 0; display: flex; border-bottom: 1px solid var(--line); }
.res-tabs button { height: 36px; margin-bottom: -1px; padding: 0 7px 2px; color: var(--muted); border-bottom: 2px solid transparent; }
.right-body { flex: 1; min-height: 0; overflow: hidden; padding: 12px 16px 0; }
.ok-box { padding: 8px 10px; border: 1px solid #9fbad3; border-radius: 5px; background: var(--soft); font-size: 12px; white-space: nowrap; }
.ok-box b { font-weight: 600; }
.stats { margin-top: 8px; display: grid; grid-template-columns: repeat(3, 1fr); gap: 6px; }
.stats div { height: 52px; padding: 6px 9px; background: #fff; border: 1px solid var(--line); border-radius: 5px; }
.stats span { display: block; font-size: 12px; line-height: 18px; color: var(--muted); }
.stats b { display: block; font: bold 13px/18px var(--mono); white-space: nowrap; }
.filter { margin-top: 11px; display: flex; justify-content: space-between; align-items: center; }
.filter .check { height: 26px; }
.right .note { margin-top: 3px; }
.warn { margin-top: 8px; padding: 8px 10px; border: 1px solid #c9ab72; border-radius: 5px; background: #f9ecd3; color: #8a5f12; font-size: 12px; white-space: nowrap; }
.res-title { margin-top: 16px; font-size: 13px; font-weight: 600; }
.checks { margin-top: 9px; background: #fff; border: 1px solid var(--line); border-radius: 5px; }
.check-row { display: grid; grid-template-columns: 16px 1fr auto; column-gap: 9px; padding: 7px 10px; min-height: 65px; border-bottom: 1px solid var(--line); }
.check-row:first-child { min-height: 182px; }
.st { width: 16px; height: 16px; border-radius: 8px; background: #e7eaed; color: var(--muted); display: grid; place-items: center; }
.st .ico { width: 11px; height: 11px; }
.st-ok { background: #dcefe6; color: #1b7a4c; }
.ct { line-height: 16px; white-space: nowrap; }
.check-row small { display: block; font-size: 12px; line-height: 1.4; color: var(--faint); white-space: nowrap; }
.cv { font: 12px/16px var(--mono); text-align: right; white-space: nowrap; }
.cv span { color: var(--muted); }
```
